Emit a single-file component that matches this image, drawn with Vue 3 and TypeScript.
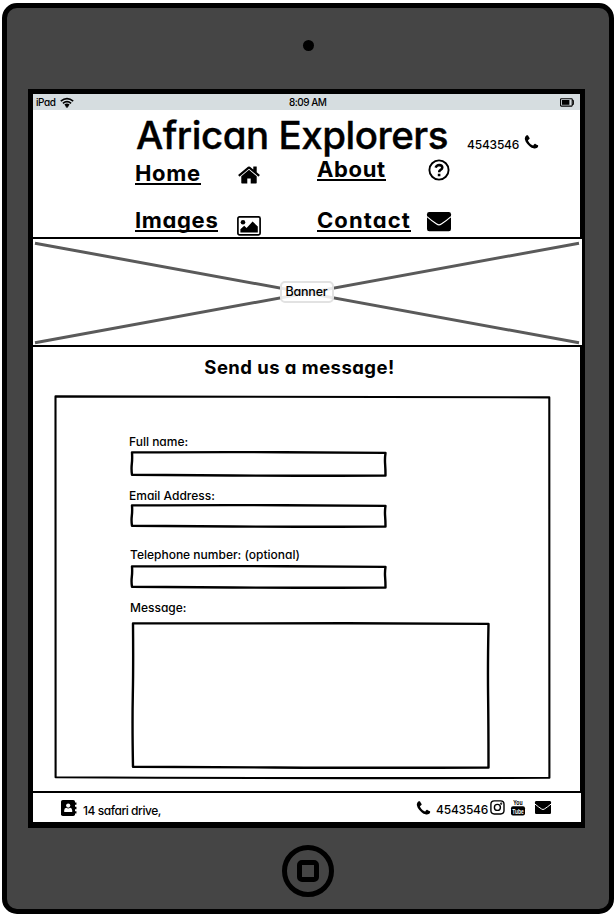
<script setup lang="ts">
interface Field {
  id: string
  label: string
  width: number
  height: number
  multiline?: boolean
}

const fields: Field[] = [
  { id: 'name', label: 'Full name:', width: 257, height: 26 },
  { id: 'email', label: 'Email Address:', width: 257, height: 24 },
  { id: 'telephone', label: 'Telephone number: (optional)', width: 257, height: 24 },
  { id: 'message', label: 'Message:', width: 359, height: 147, multiline: true },
]

const phonePath =
  'M1600 1240q0 27-10 70.5t-21 68.5q-21 50-122 106-94 51-186 51-27 0-53-3.5t-57.5-12.5-47-14.5-55.5-20.5-49-18q-98-35-175-83-127-79-264-216t-216-264q-48-77-83-175-3-9-18-49t-20.5-55.5-14.5-47-12.5-57.5-3.5-53q0-92 51-186 56-101 106-122 25-11 68.5-21t70.5-10q14 0 21 3 18 6 53 76 11 19 30 54t35 63.5 31 53.5q3 4 17.5 25t21.5 35.5 7 28.5q0 20-28.5 50t-62 55-62 53-28.5 46q0 9 5 22.5t8.5 20.5 14 24 11.5 19q76 137 174 235t235 174q2 1 19 11.5t24 14 20.5 8.5 22.5 5q18 0 46-28.5t53-62 55-62 50-28.5q14 0 28.5 7t35.5 21.5 25 17.5q25 15 53.5 31t63.5 35 54 30q70 35 76 53 3 7 3 21z'
const homePath =
  'M1472 992v480q0 26-19 45t-45 19h-384v-384h-256v384h-384q-26 0-45-19t-19-45v-480q0-1 .5-3t.5-3l575-474 575 474q1 2 1 6zm223-69l-62 74q-8 9-21 11h-3q-13 0-21-7l-692-577-692 577q-12 8-24 7-13-2-21-11l-62-74q-8-10-7-23.5t11-21.5l719-599q32-26 76-26t76 26l244 204v-195q0-14 9-23t23-9h192q14 0 23 9t9 23v408l219 182q10 8 11 21.5t-7 23.5z'

// Slightly uneven hand-drawn rectangle.
function sketch(w: number, h: number): string {
  const r = w - 1.5
  const b = h - 1.5
  return (
    `M2 1.4 Q${w * 0.4} .9 ${w * 0.6} 1.3 T${r} 1.9 ` +
    `Q${r - 0.8} ${h * 0.3} ${r - 0.4} ${h * 0.5} T${r} ${b} ` +
    `Q${w * 0.6} ${b + 0.5} ${w * 0.4} ${b} T2 ${b - 0.7} ` +
    `Q1.2 ${h * 0.7} 1.8 ${h * 0.5} T2 1.4Z`
  )
}
</script>

<template>
  <div class="device">
    <span class="camera"></span>
    <main class="screen">
      <div class="status">
        <span class="carrier">iPad</span>
        <svg class="wifi" width="14" height="11" viewBox="0 0 14 11" fill="none" stroke="#000" stroke-width="1.7">
          <path d="M.8 4.1Q7-1 13.2 4.1M2.9 6.3Q7 2.9 11.1 6.3M4.9 8.2Q7 6.6 9.1 8.2" />
          <circle cx="7" cy="9.3" r=".6" />
        </svg>
        <span class="time">8:09 AM</span>
        <svg class="battery" width="14" height="9" viewBox="0 0 14 9">
          <rect x=".6" y=".7" width="11.6" height="7.4" rx=".6" fill="none" stroke="#000" stroke-width="1.1" />
          <rect x="2" y="2" width="7.4" height="4.8" />
          <path d="M12.2 2.3h1.2v4.2h-1.2" fill="none" stroke="#000" />
        </svg>
      </div>

      <header class="header">
        <div class="title-row">
          <h1>African Explorers</h1>
          <span class="number">4543546</span>
          <svg class="call" width="17" height="17" viewBox="0 0 1792 1792"><path :d="phonePath" /></svg>
        </div>
        <nav class="nav">
          <a class="link home">Home</a>
          <svg class="ic-home" width="24" height="24" viewBox="0 0 1792 1792"><path :d="homePath" /></svg>
          <a class="link about">About</a>
          <svg class="ic-help" width="22" height="22" viewBox="0 0 22 22" fill="none" stroke="#000">
            <circle cx="11" cy="11" r="9.6" stroke-width="1.9" />
            <path d="M7.6 8.6Q8.6 5.9 11.2 5.9Q14.3 6 14.3 8.6Q14.2 10 12.6 10.9Q11.1 11.8 11.1 13.2" stroke-width="2.5" />
            <path d="M9.8 14.8h2.6v2.4H9.8z" fill="#000" stroke="none" />
          </svg>
          <a class="link images">Images</a>
          <svg class="ic-image" width="24" height="20" viewBox="0 0 24 20">
            <rect x=".9" y=".9" width="22.2" height="18" rx="1.6" fill="none" stroke="#000" stroke-width="1.7" />
            <circle cx="6" cy="6.2" r="2.3" />
            <path d="M3.4 16.5v-3.2l3.8-3.6 2.4 2.2 6-6.3 5.2 5v5.9z" />
          </svg>
          <a class="link contact">Contact</a>
          <svg class="ic-mail" width="24" height="20" viewBox="0 0 24 20">
            <rect width="24" height="19.3" rx="2.2" />
            <path d="M0 4.6Q5 9 9.7 12.1Q12 13.7 14.3 12.1Q19 9 24 4.6" fill="none" stroke="#fff" stroke-width="1.2" />
          </svg>
        </nav>
      </header>

      <section class="banner">
        <svg class="cross" width="549" height="105" viewBox="0 0 549 105" stroke="#5a5a5a" stroke-width="3">
          <path d="M2 3.2L546 102.8M2 102.8L546 3.2" />
        </svg>
        <span class="tag">Banner</span>
      </section>

      <h2>Send us a message!</h2>

      <form class="card">
        <svg class="outline" width="497" height="384" viewBox="0 0 497 384">
          <path d="M1.5 1.4Q250 1 495.3 2.4Q494.6 200 495.4 382.8Q250 383.7 1.6 382.3Q1 190 1.5 1.4Z" />
        </svg>
        <div v-for="field in fields" :key="field.id" class="field" :class="field.id">
          <label :for="field.id">{{ field.label }}</label>
          <div class="control">
            <svg class="outline" :width="field.width" :height="field.height">
              <path :d="sketch(field.width, field.height)" />
            </svg>
            <textarea v-if="field.multiline" :id="field.id"></textarea>
            <input v-else :id="field.id" type="text" />
          </div>
        </div>
      </form>

      <footer class="footer">
        <svg class="book" width="16" height="16" viewBox="0 0 16 16">
          <rect width="14" height="16" rx="1.8" />
          <path d="M14.7 2.4v2.4M14.7 6.8v2.4M14.7 11.2v2.4" stroke="#000" stroke-width="1.5" />
          <circle cx="7.2" cy="5.6" r="2.1" fill="#fff" />
          <path d="M3.2 12V10.2Q3.3 8.1 5.3 7.8Q7.2 9 9.1 7.8Q11 8.1 11.2 10.2V12z" fill="#fff" />
        </svg>
        <span class="address">14 safari drive,</span>
        <svg class="foot-call" width="17" height="17" viewBox="0 0 1792 1792"><path :d="phonePath" /></svg>
        <span class="number foot-number">4543546</span>
        <svg class="insta" width="15" height="15" viewBox="0 0 15 15" fill="none" stroke="#000" stroke-width="1.4">
          <rect x=".9" y=".9" width="13.1" height="13.1" rx="3.4" />
          <circle cx="7.4" cy="7.4" r="3" />
          <circle cx="11.2" cy="3.7" r=".4" />
        </svg>
        <svg class="tube" width="14" height="17" viewBox="0 0 14 17">
          <rect y="7.2" width="14" height="9.3" rx="2" />
          <text x="2.2" y="6" class="tube-text" textLength="9.4" lengthAdjust="spacingAndGlyphs">You</text>
          <text x="1.3" y="14.8" class="tube-text light" textLength="11.4" lengthAdjust="spacingAndGlyphs">Tube</text>
        </svg>
        <svg class="foot-mail" width="16" height="13" viewBox="0 0 16 13">
          <rect width="16" height="13" rx="1.2" />
          <path d="M0 3.1Q3.5 6 6.6 8Q8 9 9.4 8Q12.5 6 16 3.1" fill="none" stroke="#fff" stroke-width="1" />
        </svg>
      </footer>
    </main>
    <span class="home-button"><i></i></span>
  </div>
</template>

<style>
body {
  background: #fff;
}
</style>

<style scoped>
.device,
.device * {
  box-sizing: border-box;
}

.device {
  display: flex;
  flex-direction: column;
  align-items: center;
  width: 612px;
  height: 911px;
  margin: 3px 2px 2px;
  border: 5px solid #000;
  border-radius: 15px;
  background: #454545;
  color: #000;
  font-family: Inter, 'Liberation Sans', sans-serif;
  font-feature-settings: 'cv11';
  font-size: 12px;
  font-weight: 500;
  overflow: hidden;
}

svg {
  display: block;
  flex: none;
  overflow: visible;
}

.camera {
  width: 11px;
  height: 11px;
  margin: 32px 0 38px;
  border-radius: 50%;
  background: #000;
}

.screen {
  flex: none;
  width: 557px;
  height: 739px;
  margin-right: 3px;
  border: solid #000;
  border-width: 5px 5px 6px;
  background: #fff;
}

.status {
  display: grid;
  grid-template-columns: 24px 229px 271px 14px;
  align-items: center;
  height: 16px;
  padding-left: 3px;
  background: #d6dde0;
  font-size: 10px;
  line-height: 16px;
}

.carrier {
  letter-spacing: -0.4px;
}

.time {
  letter-spacing: -0.5px;
}

.header {
  height: 127px;
  padding: 8px 0 0 102px;
}

.title-row {
  display: flex;
  align-items: center;
  height: 34px;
}

h1 {
  width: 332px;
  margin: 0;
  padding-left: 1px;
  font-size: 38.5px;
  font-weight: 500;
  line-height: 34px;
  letter-spacing: -0.48px;
  white-space: nowrap;
  -webkit-text-stroke: 0.4px #000;
}

.number {
  font-size: 12px;
  letter-spacing: -0.2px;
  line-height: 16px;
}

.title-row .number {
  width: 56px;
  margin-top: 19px;
}

.call {
  margin-top: 14px;
}

.nav {
  display: grid;
  grid-template-columns: 102px 80px 110px 26px;
  grid-template-rows: 51px 26px;
  align-items: start;
  justify-items: start;
  margin-top: 7px;
}

.link {
  height: 22px;
  border-bottom: 2px solid #000;
  font-size: 22px;
  font-weight: 700;
  line-height: 20px;
  letter-spacing: 0.65px;
  white-space: nowrap;
}

.contact {
  letter-spacing: 1.1px;
}

.home {
  margin-top: 4px;
}

.ic-home {
  margin-top: 4px;
}

.ic-help {
  margin: 0 0 0 1px;
}

.ic-image {
  margin-top: 6px;
}

.ic-mail {
  margin-top: 2px;
}

.banner {
  display: grid;
  place-items: center;
  width: 553px;
  height: 110px;
  margin-left: -2px;
  border: 2px solid #000;
  background: #fff;
}

.cross,
.tag {
  grid-area: 1 / 1;
}

.tag {
  z-index: 1;
  width: 54px;
  height: 22px;
  margin-right: 2px;
  border: 2px solid #e2e2e2;
  border-radius: 5px;
  background: rgba(255, 255, 255, 0.88);
  font-size: 12.5px;
  line-height: 18px;
  letter-spacing: -0.2px;
  text-align: center;
}

h2 {
  margin: 10px 14px 0 0;
  font-size: 18.5px;
  font-weight: 700;
  line-height: 20px;
  letter-spacing: 0.45px;
  text-align: center;
}

.card {
  position: relative;
  width: 497px;
  height: 384px;
  margin: 18px 0 0 21px;
  padding: 39px 0 0 75px;
}

.outline {
  position: absolute;
  inset: 0;
  fill: none;
  stroke: #000;
  stroke-width: 2.4;
  stroke-linejoin: round;
}

.card > .outline {
  stroke-width: 2.1;
}

.field {
  display: flex;
  flex-direction: column;
}

label {
  height: 16px;
  line-height: 16px;
  white-space: nowrap;
}

.control {
  position: relative;
  width: 257px;
  height: 24px;
  margin: 1px 0 0 1px;
}

.name .control {
  height: 26px;
}

.email {
  margin-top: 11px;
}

.email .control {
  margin-top: 0;
}

.telephone {
  margin-top: 19px;
}

.telephone label {
  padding-left: 1px;
}

.telephone .control {
  margin-top: 2px;
}

.message {
  margin-top: 11px;
}

.message label {
  padding-left: 1px;
}

.message .control {
  width: 359px;
  height: 147px;
  margin: 6px 0 0 2px;
}

input,
textarea {
  position: relative;
  display: block;
  width: 100%;
  height: 100%;
  padding: 4px 8px;
  border: 0;
  outline: 0;
  background: transparent;
  font: inherit;
  resize: none;
}

.footer {
  display: flex;
  align-items: flex-start;
  width: 548px;
  height: 31px;
  margin-top: 12px;
  padding: 7px 0 0 28px;
  border-top: 2px solid #000;
  background: #fff;
}

.address {
  width: 333px;
  margin: 3px 0 0 6px;
  line-height: 16px;
  letter-spacing: -0.45px;
}

.foot-call {
  margin-left: -1px;
}

.foot-number {
  width: 54px;
  margin: 2px 0 0 4px;
}

.tube {
  margin: -1px 10px 0 6px;
}

.tube-text {
  font-family: 'Liberation Sans', sans-serif;
  font-size: 8px;
  font-weight: 700;
}

.light {
  fill: #fff;
}

.foot-mail {
  margin-top: 1px;
}

.home-button {
  display: grid;
  flex: none;
  place-items: center;
  width: 52px;
  height: 52px;
  margin-top: 17px;
  border: 5px solid #000;
  border-radius: 50%;
}

.home-button i {
  width: 22px;
  height: 22px;
  border: 5px solid #000;
  border-radius: 5px;
}
</style>
